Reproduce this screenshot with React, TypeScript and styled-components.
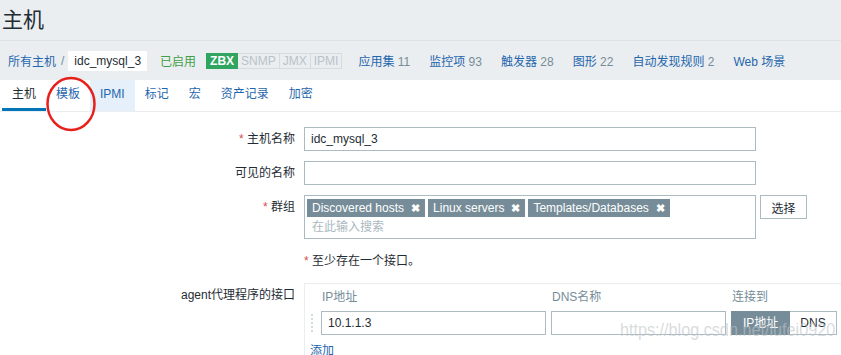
import styled, { createGlobalStyle } from 'styled-components';

const GlobalStyle = createGlobalStyle`
  html, body {
    margin: 0;
    padding: 0;
    background: #ebeef0;
    overflow: hidden;
  }
  body {
    font-family: "Liberation Sans", Arial, "Noto Sans CJK SC", sans-serif;
    font-size: 12px;
    color: #1f2c33;
  }
  * { box-sizing: border-box; }
`;

const Page = styled.div`
  position: relative;
  width: 841px;
  height: 355px;
  overflow: hidden;
`;

const Header = styled.header`
  height: 41px;
  padding: 7px 0 0 2px;
  border-bottom: 1px solid #dde2e5;
  h1 {
    margin: 0;
    font-size: 21px;
    line-height: 26px;
    font-weight: normal;
    color: #1f2c33;
  }
`;

const Nav = styled.nav`
  height: 39px;
  display: flex;
  align-items: center;
  padding-left: 8px;
`;

const Crumb = styled.a`
  color: #1f66ad;
  text-decoration: none;
`;

const Slash = styled.span`
  color: #768d99;
  margin: 0 4px 0 5px;
`;

const CurrentCrumb = styled.span`
  background: #fff;
  height: 20px;
  line-height: 20px;
  padding: 0 6px;
  color: #1f2c33;
`;

const Status = styled.span`
  color: #429e47;
  margin-left: 13px;
`;

const Badges = styled.span`
  display: inline-flex;
  margin-left: 10px;
  margin-right: 16px;
`;

const Badge = styled.span<{ $on?: boolean }>`
  height: 16px;
  line-height: 14px;
  padding: 0 3px;
  font-size: 12px;
  font-weight: ${(p) => (p.$on ? 'bold' : 'normal')};
  color: ${(p) => (p.$on ? '#fff' : '#b8c3c9')};
  background: ${(p) => (p.$on ? '#2fa560' : '#ebeef0')};
  border: 1px solid ${(p) => (p.$on ? '#2fa560' : '#d5dce0')};
  & + & { border-left: none; }
`;

const NavLink = styled.span`
  margin-right: 19px;
  a {
    color: #1f66ad;
    text-decoration: none;
  }
  span {
    color: #768d99;
  }
`;

const Content = styled.main`
  background: #fff;
  height: 275px;
`;

const Tabs = styled.ul`
  display: flex;
  margin: 0;
  padding: 0 0 0 2px;
  list-style: none;
  height: 32px;
  border-bottom: 1px solid #ebeef0;
`;

const Tab = styled.li<{ $active?: boolean; $hover?: boolean }>`
  padding: 0 10px;
  line-height: 29px;
  height: 31px;
  color: ${(p) => (p.$active ? '#1f2c33' : '#1f66ad')};
  background: ${(p) => (p.$hover ? '#e5f0fa' : 'transparent')};
  border-bottom: 3px solid ${(p) => (p.$active ? '#0275b8' : 'transparent')};
`;

const Form = styled.div`
  padding-top: 15px;
`;

const Row = styled.div<{ $gap?: number }>`
  display: grid;
  grid-template-columns: 295px 1fr;
  column-gap: 9px;
  margin-bottom: ${(p) => p.$gap ?? 10}px;
`;

const Label = styled.label<{ $required?: boolean }>`
  text-align: right;
  line-height: 24px;
  color: #1f2c33;
  &::before {
    content: ${(p) => (p.$required ? "'* '" : "''")};
    color: #d64e4e;
  }
`;

const Field = styled.div`
  display: flex;
  align-items: flex-start;
`;

const TextInput = styled.input<{ $w: number }>`
  width: ${(p) => p.$w}px;
  height: 24px;
  border: 1px solid #acbbc2;
  padding: 0 6px;
  font: inherit;
  color: #1f2c33;
  outline: none;
`;

const MultiSelect = styled.div`
  width: 452px;
  height: 44px;
  border: 1px solid #acbbc2;
  padding: 3px 2px;
`;

const TagList = styled.div`
  display: flex;
  gap: 3px;
`;

const Tag = styled.span`
  display: inline-flex;
  align-items: center;
  height: 18px;
  padding: 0 5px;
  background: #768d99;
  color: #fff;
  font-size: 12px;
  b {
    margin-left: 7px;
    font-size: 11px;
  }
`;

const Placeholder = styled.div`
  color: #aab8c0;
  line-height: 18px;
  padding-left: 5px;
  margin-top: 1px;
`;

const Button = styled.button`
  margin-left: 4px;
  width: 47px;
  height: 24px;
  background: #fff;
  border: 1px solid #acbbc2;
  font: inherit;
  color: #1f2c33;
  padding: 0;
`;

const Hint = styled.div`
  line-height: 24px;
  &::before {
    content: '* ';
    color: #d64e4e;
  }
`;

const InterfaceBox = styled.div`
  border: 1px solid #ebeef0;
  border-right: none;
  padding-top: 1px;
  height: 80px;
`;

const IfaceGrid = styled.div`
  display: grid;
  grid-template-columns: 11px 225px 175px 107px;
  column-gap: 5px;
  row-gap: 2px;
`;

const ColHead = styled.div`
  line-height: 24px;
  color: #768d99;
  padding-left: 1px;
`;

const Handle = styled.div`
  margin: 2px 0 0 5px;
  width: 5px;
  height: 20px;
  background-image: radial-gradient(circle, #d3dadd 1px, transparent 1.2px);
  background-size: 4px 4px;
`;

const Toggle = styled.div`
  display: flex;
`;

const ToggleBtn = styled.span<{ $on?: boolean }>`
  height: 24px;
  line-height: 22px;
  padding: 0 ${(p) => (p.$on ? 11 : 10)}px;
  border: 1px solid ${(p) => (p.$on ? '#768d99' : '#acbbc2')};
  background: ${(p) => (p.$on ? '#768d99' : '#fff')};
  color: ${(p) => (p.$on ? '#fff' : '#1f2c33')};
  & + & { border-left: none; }
`;

const AddLink = styled.a`
  display: block;
  margin: 4px 0 0 5px;
  line-height: 24px;
  color: #1f66ad;
`;

const Circle = styled.svg`
  position: absolute;
  left: 45px;
  top: 76px;
`;

const Watermark = styled.div`
  position: absolute;
  right: 6px;
  top: 320px;
  font-size: 18px;
  color: rgba(190, 196, 200, 0.6);
  transform: scaleX(0.9);
  transform-origin: right center;
  pointer-events: none;
`;

const navLinks = [
  ['应用集', '11'],
  ['监控项', '93'],
  ['触发器', '28'],
  ['图形', '22'],
  ['自动发现规则', '2'],
  ['Web 场景', ''],
];

const tabs = ['主机', '模板', 'IPMI', '标记', '宏', '资产记录', '加密'];

export default function App() {
  return (
    <Page>
      <GlobalStyle />
      <Header>
        <h1>主机</h1>
      </Header>
      <Nav>
        <Crumb>所有主机</Crumb>
        <Slash>/</Slash>
        <CurrentCrumb>idc_mysql_3</CurrentCrumb>
        <Status>已启用</Status>
        <Badges>
          <Badge $on>ZBX</Badge>
          <Badge>SNMP</Badge>
          <Badge>JMX</Badge>
          <Badge>IPMI</Badge>
        </Badges>
        {navLinks.map(([name, count]) => (
          <NavLink key={name}>
            <a>{name}</a>
            {count && <span> {count}</span>}
          </NavLink>
        ))}
      </Nav>
      <Content>
        <Tabs>
          {tabs.map((t, i) => (
            <Tab key={t} $active={i === 0} $hover={t === 'IPMI'}>
              {t}
            </Tab>
          ))}
        </Tabs>
        <Form>
          <Row>
            <Label $required>主机名称</Label>
            <Field>
              <TextInput $w={452} defaultValue="idc_mysql_3" />
            </Field>
          </Row>
          <Row>
            <Label>可见的名称</Label>
            <Field>
              <TextInput $w={452} />
            </Field>
          </Row>
          <Row>
            <Label $required>群组</Label>
            <Field>
              <MultiSelect>
                <TagList>
                  <Tag>Discovered hosts<b>✖</b></Tag>
                  <Tag>Linux servers<b>✖</b></Tag>
                  <Tag>Templates/Databases<b>✖</b></Tag>
                </TagList>
                <Placeholder>在此输入搜索</Placeholder>
              </MultiSelect>
              <Button>选择</Button>
            </Field>
          </Row>
          <Row>
            <span />
            <Hint>至少存在一个接口。</Hint>
          </Row>
          <Row>
            <Label>agent代理程序的接口</Label>
            <InterfaceBox>
              <IfaceGrid>
                <span />
                <ColHead>IP地址</ColHead>
                <ColHead>DNS名称</ColHead>
                <ColHead>连接到</ColHead>
                <Handle />
                <TextInput $w={225} defaultValue="10.1.1.3" />
                <TextInput $w={175} />
                <Toggle>
                  <ToggleBtn $on>IP地址</ToggleBtn>
                  <ToggleBtn>DNS</ToggleBtn>
                </Toggle>
              </IfaceGrid>
              <AddLink>添加</AddLink>
            </InterfaceBox>
          </Row>
        </Form>
      </Content>
      <Circle width="54" height="58" viewBox="0 0 54 58">
        <ellipse cx="26" cy="28" rx="23.5" ry="26" fill="none" stroke="#e8201c" strokeWidth="2.5" />
      </Circle>
      <Watermark>https://blog.csdn.net/lufei0920</Watermark>
    </Page>
  );
}
